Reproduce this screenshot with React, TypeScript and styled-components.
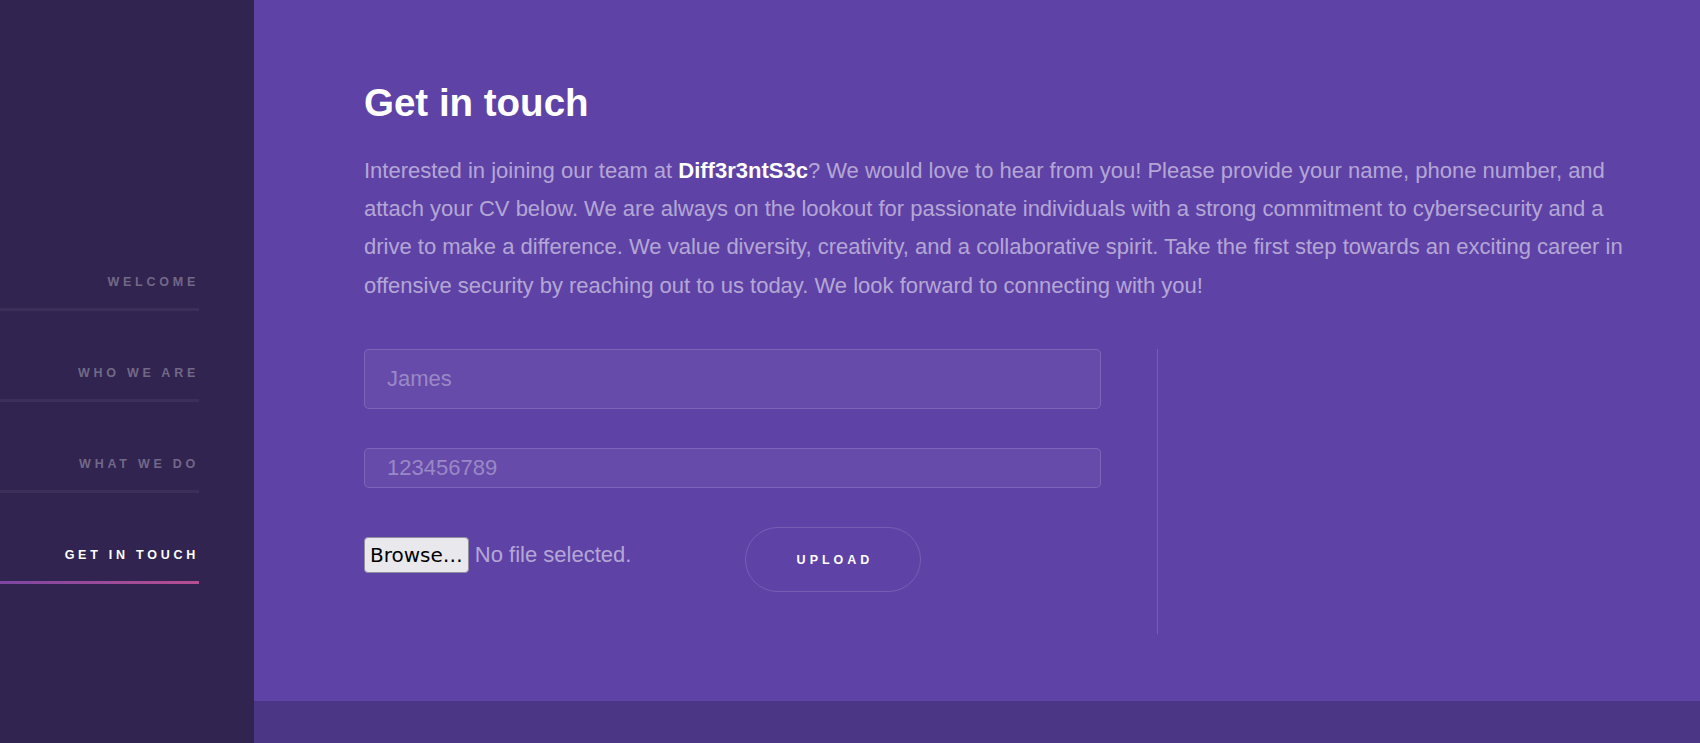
import React from 'react'
import styled, { createGlobalStyle } from 'styled-components'

const GlobalStyle = createGlobalStyle`
  html, body {
    margin: 0;
    padding: 0;
  }
  body {
    background: #5e42a6;
    font-family: 'Liberation Sans', Arial, Helvetica, sans-serif;
  }
  * {
    box-sizing: border-box;
  }
`

const Page = styled.div`
  display: flex;
  height: 100vh;
`

const Sidebar = styled.aside`
  width: 254px;
  flex-shrink: 0;
  background: #312450;
  padding-top: 274px;
`

const NavList = styled.ul`
  list-style: none;
  margin: 0;
  padding: 0;
  width: 199px;
  display: flex;
  flex-direction: column;
  gap: 54px;
`

const NavLink = styled.a<{ $active?: boolean }>`
  display: block;
  text-align: right;
  font-size: 12.5px;
  font-weight: bold;
  letter-spacing: 0.3em;
  text-transform: uppercase;
  line-height: 16px;
  padding-bottom: 21px;
  color: ${({ $active }) => ($active ? '#ffffff' : 'rgba(255, 255, 255, 0.32)')};
  text-decoration: none;
  background-image: ${({ $active }) =>
    $active
      ? 'linear-gradient(to right, #7c47a4, #b74e91)'
      : 'linear-gradient(rgba(255, 255, 255, 0.05), rgba(255, 255, 255, 0.05))'};
  background-repeat: no-repeat;
  background-position: left bottom;
  background-size: 100% 3px;
`

const Main = styled.main`
  flex: 1;
  display: flex;
  flex-direction: column;
  min-width: 0;
`

const Content = styled.section`
  flex: 1;
  padding: 84px 60px 0 110px;
`

const Title = styled.h2`
  margin: 0;
  font-size: 38.5px;
  line-height: 1;
  font-weight: bold;
  color: #ffffff;
`

const Intro = styled.p`
  margin: 29px 0 0;
  font-size: 22px;
  line-height: 38.4px;
  color: rgba(255, 255, 255, 0.55);

  strong {
    color: #ffffff;
  }
`

const Split = styled.div`
  display: flex;
  margin-top: 44px;
`

const FormColumn = styled.form`
  width: 794px;
  padding: 0 56px 42px 0;
  border-right: 1px solid rgba(255, 255, 255, 0.15);
  display: flex;
  flex-direction: column;
  gap: 39px;
`

const TextInput = styled.input<{ $tall?: boolean }>`
  display: block;
  width: 100%;
  height: ${({ $tall }) => ($tall ? '60px' : '40px')};
  padding: 0 22px;
  border: 1px solid rgba(255, 255, 255, 0.15);
  border-radius: 5px;
  background: rgba(255, 255, 255, 0.05);
  color: #ffffff;
  font-family: inherit;
  font-size: 22px;
  outline: none;

  &::placeholder {
    color: rgba(255, 255, 255, 0.35);
  }
`

const ActionsRow = styled.div`
  display: flex;
  align-items: flex-start;
`

const FileField = styled.div`
  width: 381px;
  margin-top: 10px;
  display: flex;
  align-items: center;
  gap: 6px;
`

const BrowseButton = styled.button`
  height: 36px;
  padding: 0 5px;
  border: 1px solid #8f8f9d;
  border-radius: 4px;
  background: #e9e9ed;
  color: #000000;
  font-family: 'DejaVu Sans', sans-serif;
  font-size: 20px;
`

const FileStatus = styled.span`
  font-size: 22px;
  color: rgba(255, 255, 255, 0.55);
`

const UploadButton = styled.button`
  width: 176px;
  height: 65px;
  border: 1px solid rgba(255, 255, 255, 0.15);
  border-radius: 33px;
  background: transparent;
  color: #ffffff;
  font-family: inherit;
  font-size: 12.5px;
  font-weight: bold;
  letter-spacing: 0.32em;
  padding: 0 0 0 0.32em;
  text-transform: uppercase;
`

const Footer = styled.footer`
  height: 42px;
  background: #4b3585;
`

const navItems = ['Welcome', 'Who we are', 'What we do', 'Get in touch']

function App(): JSX.Element {
  return (
    <>
      <GlobalStyle />
      <Page>
        <Sidebar>
          <nav>
            <NavList>
              {navItems.map((label) => (
                <li key={label}>
                  <NavLink href="#" $active={label === 'Get in touch'}>
                    {label}
                  </NavLink>
                </li>
              ))}
            </NavList>
          </nav>
        </Sidebar>
        <Main>
          <Content>
            <Title>Get in touch</Title>
            <Intro>
              Interested in joining our team at <strong>Diff3r3ntS3c</strong>?
              We would love to hear from you! Please provide your name, phone
              number, and attach your CV below. We are always on the lookout
              for passionate individuals with a strong commitment to
              cybersecurity and a drive to make a difference. We value
              diversity, creativity, and a collaborative spirit. Take the first
              step towards an exciting career in offensive security by reaching
              out to us today. We look forward to connecting with you!
            </Intro>
            <Split>
              <FormColumn onSubmit={(e) => e.preventDefault()}>
                <TextInput $tall type="text" placeholder="James" />
                <TextInput type="text" placeholder="123456789" />
                <ActionsRow>
                  <FileField>
                    <BrowseButton type="button">Browse…</BrowseButton>
                    <FileStatus>No file selected.</FileStatus>
                  </FileField>
                  <UploadButton type="submit">Upload</UploadButton>
                </ActionsRow>
              </FormColumn>
            </Split>
          </Content>
          <Footer />
        </Main>
      </Page>
    </>
  )
}

export default App
